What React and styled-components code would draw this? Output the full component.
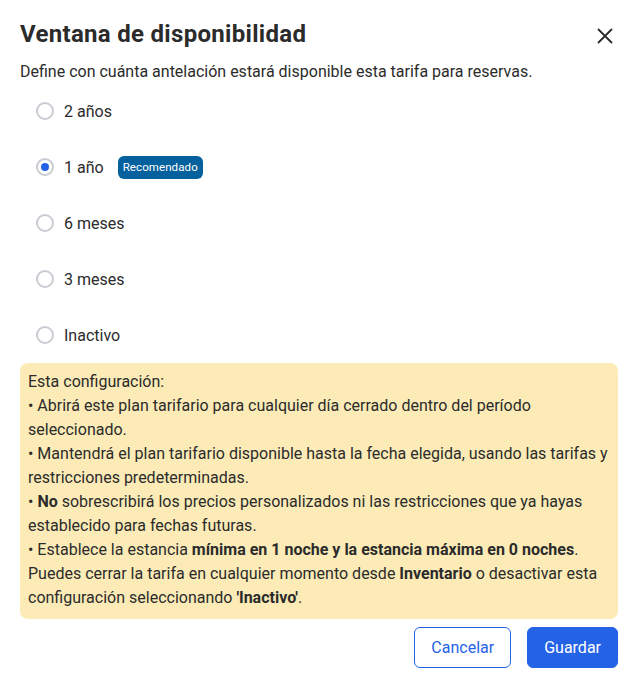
import React, { useState } from 'react'
import styled, { createGlobalStyle } from 'styled-components'

const GlobalStyle = createGlobalStyle`
  body {
    margin: 0;
    background: #fff;
    font-family: Roboto, "Liberation Sans", sans-serif;
    color: #2b2b2b;
  }
`

const Dialog = styled.div`
  width: 640px;
  box-sizing: border-box;
  padding: 20px 22px 23px 20px;
`

const Header = styled.div`
  display: flex;
  justify-content: space-between;
  align-items: center;
  height: 28px;
`

const Title = styled.h2`
  margin: 0;
  font-size: 24px;
  line-height: 28px;
  font-weight: 700;
  letter-spacing: 0.3px;
  color: #2b2b2b;
`

const CloseButton = styled.button`
  border: 0;
  background: none;
  padding: 0;
  width: 24px;
  height: 24px;
  display: flex;
  align-items: center;
  justify-content: center;
  margin-right: 1px;
  margin-top: 4px;
  cursor: pointer;
`

const Subtitle = styled.p`
  margin: 13px 0 0;
  font-size: 16px;
  line-height: 22px;
  color: #2b2b2b;
`

const Options = styled.div`
  display: flex;
  flex-direction: column;
`

const Option = styled.label`
  display: flex;
  align-items: center;
  height: 56px;
  padding-left: 16px;
  font-size: 16px;
  color: #2b2b2b;
  cursor: pointer;
`

const Radio = styled.span`
  width: 18px;
  height: 18px;
  box-sizing: border-box;
  border-radius: 50%;
  border: 2px solid #c9ccd1;
  display: flex;
  align-items: center;
  justify-content: center;
  margin-right: 10px;
  flex-shrink: 0;

  &::after {
    content: '';
    width: 8px;
    height: 8px;
    border-radius: 50%;
    background: ${({ $checked }) => ($checked ? '#2563e6' : 'transparent')};
  }
`

const Badge = styled.span`
  margin-left: 14px;
  background: #05609e;
  color: #fff;
  font-size: 11.5px;
  line-height: 23px;
  padding: 0 5px;
  border-radius: 6px;
  letter-spacing: 0.1px;
`

const Notice = styled.div`
  background: #fcebb7;
  border-radius: 8px;
  padding: 7px 8px 9px;
  font-size: 16px;
  line-height: 24px;
  color: #2b2b2b;

  b {
    font-weight: 700;
  }
`

const Line = styled.div``

const Actions = styled.div`
  display: flex;
  justify-content: flex-end;
  gap: 16px;
  margin-top: 8px;
`

const Button = styled.button`
  height: 41px;
  box-sizing: border-box;
  border-radius: 6px;
  font-family: inherit;
  font-size: 16px;
  padding: 0 16px;
  cursor: pointer;
  border: 1px solid #2563e6;
  background: ${({ $primary }) => ($primary ? '#2563e6' : '#fff')};
  color: ${({ $primary }) => ($primary ? '#fff' : '#2563e6')};
`

const options = [
  { id: '2y', label: '2 años' },
  { id: '1y', label: '1 año', badge: 'Recomendado' },
  { id: '6m', label: '6 meses' },
  { id: '3m', label: '3 meses' },
  { id: 'off', label: 'Inactivo' },
]

export default function App() {
  const [value, setValue] = useState('1y')

  return (
    <>
      <GlobalStyle />
      <Dialog>
        <Header>
          <Title>Ventana de disponibilidad</Title>
          <CloseButton aria-label="Cerrar">
            <svg width="16" height="16" viewBox="0 0 16 16" fill="none">
              <path d="M1.5 1.5l13 13M14.5 1.5l-13 13" stroke="#2b2b2b" strokeWidth="1.8" strokeLinecap="round" />
            </svg>
          </CloseButton>
        </Header>
        <Subtitle>Define con cuánta antelación estará disponible esta tarifa para reservas.</Subtitle>
        <Options>
          {options.map((o) => (
            <Option key={o.id} onClick={() => setValue(o.id)}>
              <Radio $checked={value === o.id} />
              {o.label}
              {o.badge && <Badge>{o.badge}</Badge>}
            </Option>
          ))}
        </Options>
        <Notice>
          <Line>Esta configuración:</Line>
          <Line>• Abrirá este plan tarifario para cualquier día cerrado dentro del período seleccionado.</Line>
          <Line>• Mantendrá el plan tarifario disponible hasta la fecha elegida, usando las tarifas y restricciones predeterminadas.</Line>
          <Line>• <b>No</b> sobrescribirá los precios personalizados ni las restricciones que ya hayas establecido para fechas futuras.</Line>
          <Line>• Establece la estancia <b>mínima en 1 noche y la estancia máxima en 0 noches</b>.</Line>
          <Line>Puedes cerrar la tarifa en cualquier momento desde <b>Inventario</b> o desactivar esta configuración seleccionando <b>'Inactivo'</b>.</Line>
        </Notice>
        <Actions>
          <Button>Cancelar</Button>
          <Button $primary>Guardar</Button>
        </Actions>
      </Dialog>
    </>
  )
}
